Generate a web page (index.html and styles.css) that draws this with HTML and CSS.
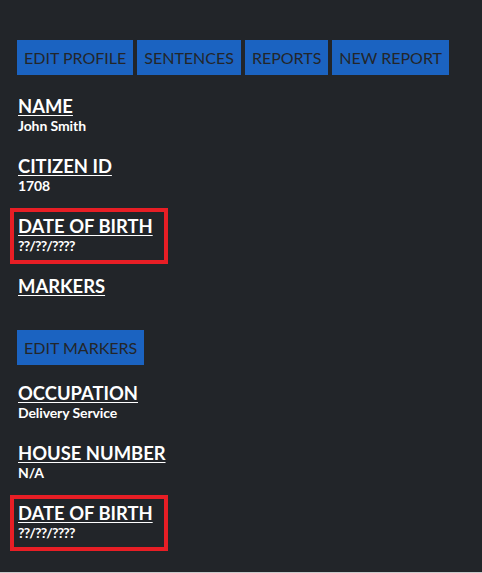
FILE: index.html
```html
<!DOCTYPE html>
<html lang="en">
<head>
    <meta charset="UTF-8">
    <meta name="viewport" content="width=device-width, initial-scale=1.0">
    <title>Citizen profile</title>
    <link rel="stylesheet" href="styles.css">
</head>
<body>
    <div class="page">
        <div class="actions">
            <button class="btn">EDIT PROFILE</button>
            <button class="btn">SENTENCES</button>
            <button class="btn">REPORTS</button>
            <button class="btn">NEW REPORT</button>
        </div>

        <div class="field">
            <h2>NAME</h2>
            <p>John Smith</p>
        </div>
        <div class="field">
            <h2>CITIZEN ID</h2>
            <p>1708</p>
        </div>
        <div class="field flagged">
            <h2>DATE OF BIRTH</h2>
            <p class="unknown">??/??/????</p>
        </div>
        <div class="field">
            <h2>MARKERS</h2>
        </div>

        <div class="actions markers">
            <button class="btn">EDIT MARKERS</button>
        </div>

        <div class="field">
            <h2>OCCUPATION</h2>
            <p>Delivery Service</p>
        </div>
        <div class="field">
            <h2>HOUSE NUMBER</h2>
            <p>N/A</p>
        </div>
        <div class="field flagged">
            <h2>DATE OF BIRTH</h2>
            <p class="unknown">??/??/????</p>
        </div>
    </div>
</body>
</html>
```

FILE: styles.css
```css
html, body {
    margin: 0;
    padding: 0;
}
body {
    background-color: #222529;
    color: #ffffff;
    font-family: Lato, 'Open Sans', sans-serif;
}
.page {
    height: 573px;
    box-sizing: border-box;
    padding: 40px 0 0 17px;
    border-bottom: 1px solid #c9cacb;
    overflow: hidden;
}
.actions {
    display: flex;
    gap: 4px;
    margin-bottom: 19px;
}
.actions.markers {
    margin-top: 32px;
    margin-bottom: 16px;
}
.btn {
    font-family: Lato, 'Open Sans', sans-serif;
    font-size: 16px;
    color: #23262a;
    background-color: #1b63c1;
    border: none;
    height: 35px;
    padding: 0 7px;
    cursor: pointer;
}
.field {
    position: relative;
    display: table;
    margin-left: 1px;
    margin-bottom: 20px;
}
.field h2 {
    margin: 0;
    font-size: 18.4px;
    line-height: 24px;
    font-weight: 700;
    text-decoration: underline;
    text-underline-offset: 2px;
}
.field p {
    margin: 0;
    font-size: 14px;
    line-height: 16px;
    font-weight: 700;
    letter-spacing: -0.1px;
}
.field p.unknown {
    letter-spacing: -0.8px;
}
.flagged::after {
    content: '';
    position: absolute;
    left: -8px;
    right: -15px;
    top: -6px;
    bottom: -10px;
    border: 4px solid #e81e25;
}
```
